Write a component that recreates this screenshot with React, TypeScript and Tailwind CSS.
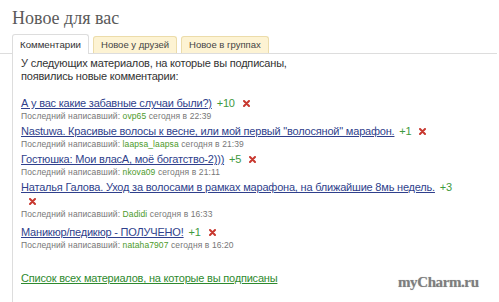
const ITEMS = [
  { title: "А у вас какие забавные случаи были?)", count: "+10", author: "ovp65", time: "сегодня в 22:39" },
  { title: "Nastuwa. Красивые волосы к весне, или мой первый \"волосяной\" марафон.", count: "+1", author: "laapsa_laapsa", time: "сегодня в 21:39" },
  { title: "Гостюшка: Мои власА, моё богатство-2)))", count: "+5", author: "nkova09", time: "сегодня в 21:11" },
  { title: "Наталья Галова. Уход за волосами в рамках марафона, на ближайшие 8мь недель.", count: "+3", author: "Dadidi", time: "сегодня в 16:33" },
  { title: "Маникюр/педикюр - ПОЛУЧЕНО!", count: "+1", author: "nataha7907", time: "сегодня в 16:20" },
];

function Cross() {
  return (
    <svg width="7" height="7" viewBox="0 0 7 7" className="inline-block ml-[8px] align-[0px]">
      <path d="M1 1 L6 6 M6 1 L1 6" stroke="#c8382f" strokeWidth="2" strokeLinecap="round" />
    </svg>
  );
}

export default function App() {
  return (
    <div className="w-[499px] h-[302px] bg-white overflow-hidden relative font-['Liberation_Sans',Arial,sans-serif]">
      <h1 className="pl-[12px] pt-[7px] text-[18px] leading-[22px] text-[#5a5a5a] font-['Liberation_Serif',serif]">Новое для вас</h1>

      {/* Tabs */}
      <div className="flex items-end gap-[4px] pl-[12px] mt-[6px] border-b border-[#ddd] mr-[2px] h-[19px]">
        <div className="h-[20px] -mb-px px-[7px] rounded-t-[3px] border border-b-0 border-[#ddd] bg-white text-[9.7px] leading-[19px] text-[#333]">Комментарии</div>
        <div className="h-[17px] px-[7px] rounded-t-[3px] border border-b-0 border-[#ecdcaa] bg-[#fdf3d3] text-[9.5px] leading-[16px] text-[#444]">Новое у друзей</div>
        <div className="h-[17px] px-[7px] rounded-t-[3px] border border-b-0 border-[#ecdcaa] bg-[#fdf3d3] text-[9.5px] leading-[16px] text-[#444]">Новое в группах</div>
      </div>

      {/* Panel */}
      <div className="ml-[12px] border-l border-[#ddd] pl-[8px] pt-[3px] h-[260px]">
        <p className="text-[11px] leading-[13px] tracking-[-0.2px] text-[#333]">
          У следующих материалов, на которые вы подписаны,<br />появились новые комментарии:
        </p>
        <div className="mt-[13px] w-[436px] flex flex-col">
          {ITEMS.map((it, i) => (
            <div key={it.author} className={i === 3 ? "pb-[5px]" : "pb-[2px]"}>
              <div className="text-[11px] leading-[14px] tracking-[-0.2px]">
                <a className="text-[#2f3f8c] underline underline-offset-[1px] decoration-[#2f3f8c]">{it.title}</a>{" "}
                <span className="text-[#3e9a3e] ml-[2px]">{it.count}</span>
                <Cross />
              </div>
              <div className="text-[8.5px] leading-[12px] text-[#777] tracking-[0.1px]">
                Последний написавший: <span className="text-[#4c9a2a]">{it.author}</span> {it.time}
              </div>
            </div>
          ))}
        </div>
        <a className="block mt-[18px] text-[11px] leading-[14px] tracking-[-0.2px] text-[#2e8a2e] underline underline-offset-[1px]">Список всех материалов, на которые вы подписаны</a>
      </div>

      <div className="absolute left-[398px] top-[272px] text-[15px] leading-[20px] font-bold text-[#7e7e7e] font-['Liberation_Serif',serif] tracking-[-0.4px] [text-shadow:0_0_1px_#bbb]">myCharm.ru</div>
    </div>
  );
}
